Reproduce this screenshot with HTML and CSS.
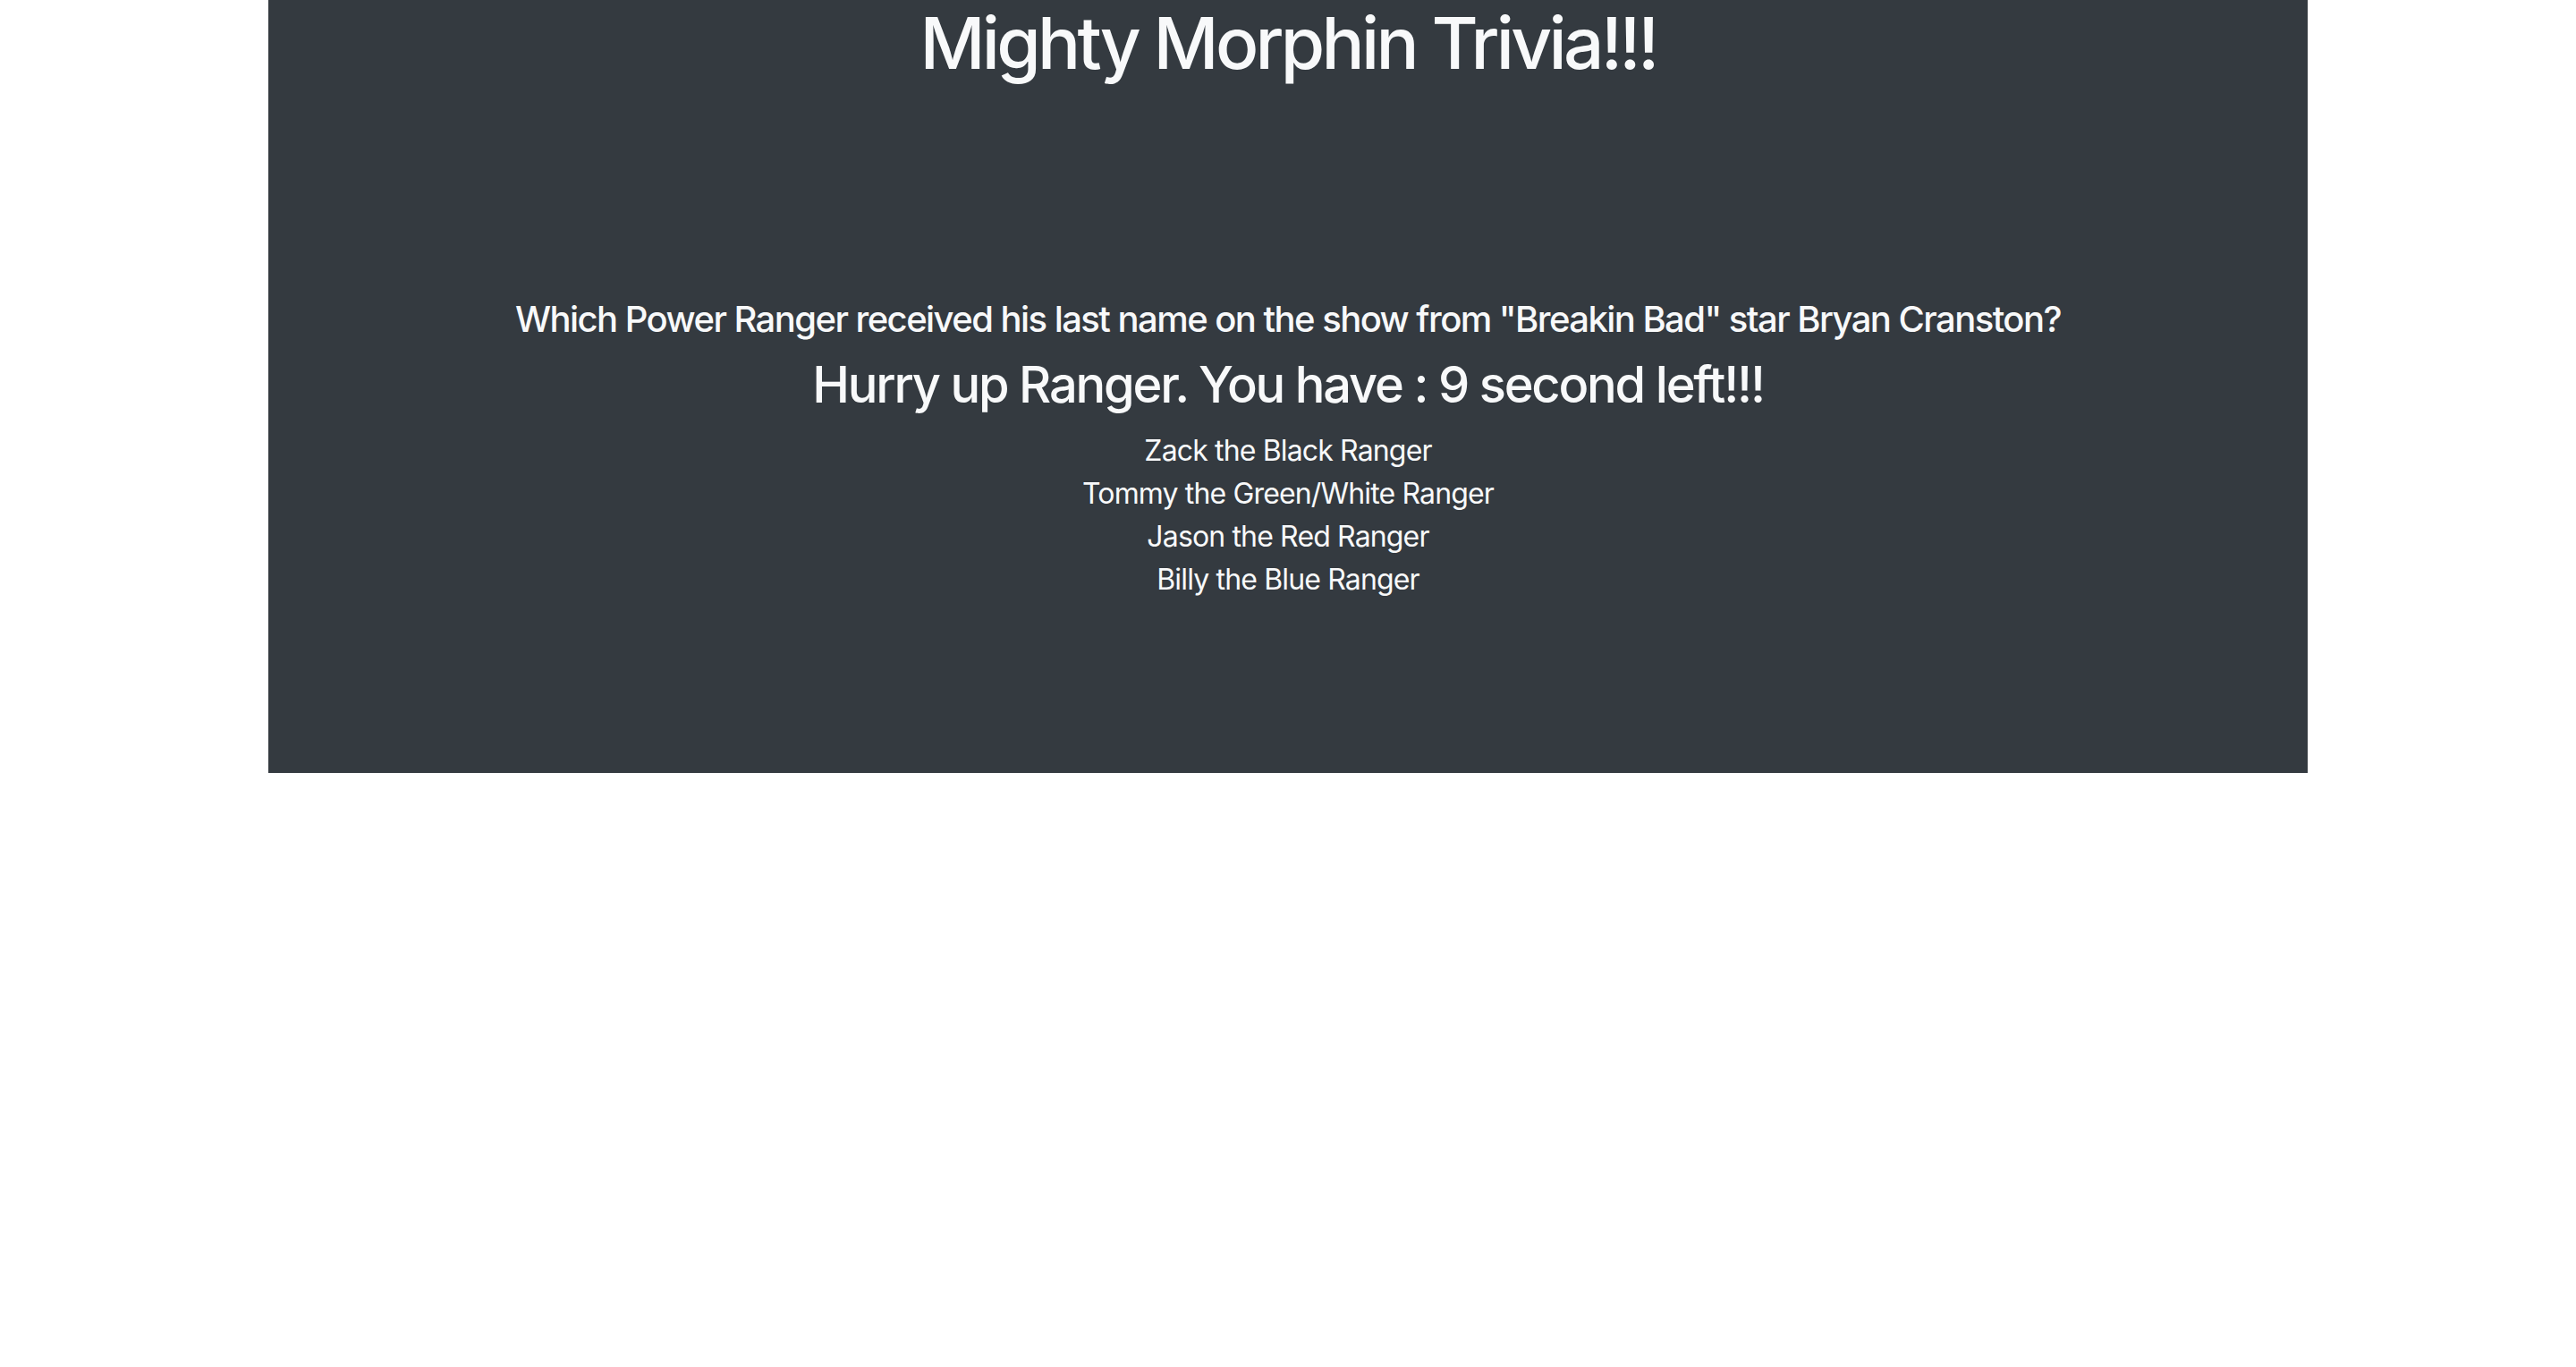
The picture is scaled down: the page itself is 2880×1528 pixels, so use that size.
FILE: index.html
```html
<!DOCTYPE html>
<html lang="en">
<head>
<meta charset="utf-8">
<title>Mighty Morphin Trivia!!!</title>
<link rel="stylesheet" href="styles.css">
</head>
<body>
<main class="board">
  <h1 class="title">Mighty Morphin Trivia!!!</h1>
  <section class="quiz">
    <h5 class="question">Which Power Ranger received his last name on the show from "Breakin Bad" star Bryan Cranston?</h5>
    <h3 class="timer">Hurry up Ranger. You have : 9 second left!!!</h3>
    <ul class="answers">
      <li class="answer">Zack the Black Ranger</li>
      <li class="answer">Tommy the Green/White Ranger</li>
      <li class="answer">Jason the Red Ranger</li>
      <li class="answer">Billy the Blue Ranger</li>
    </ul>
  </section>
</main>
</body>
</html>
```
FILE: styles.css
```css
html, body {
  margin: 0;
  padding: 0;
  background: #ffffff;
}
body {
  font-family: Inter, "Noto Sans", "Liberation Sans", sans-serif;
  font-size: 32px;
  line-height: 1.5;
  color: #212529;
}
.board {
  width: 2280px;
  margin: 0 auto;
  background: #343a40;
  color: #f8f9fa;
  text-align: center;
  padding-bottom: 192px;
}
.title {
  margin: 0 0 16px;
  font-size: 80px;
  line-height: 1.2;
  font-weight: 500;
  letter-spacing: -3.7px;
}
.quiz {
  padding-top: 221px;
}
.question {
  margin: 0 0 16px;
  font-size: 40px;
  line-height: 1.2;
  font-weight: 500;
  letter-spacing: -1.55px;
}
.timer {
  margin: 0 0 16px;
  font-size: 56px;
  line-height: 1.2;
  font-weight: 500;
  letter-spacing: -2.2px;
}
.answers {
  list-style: none;
  margin: 0;
  padding: 0;
}
.answer {
  font-size: 32px;
  line-height: 1.5;
  letter-spacing: -0.85px;
}
```
